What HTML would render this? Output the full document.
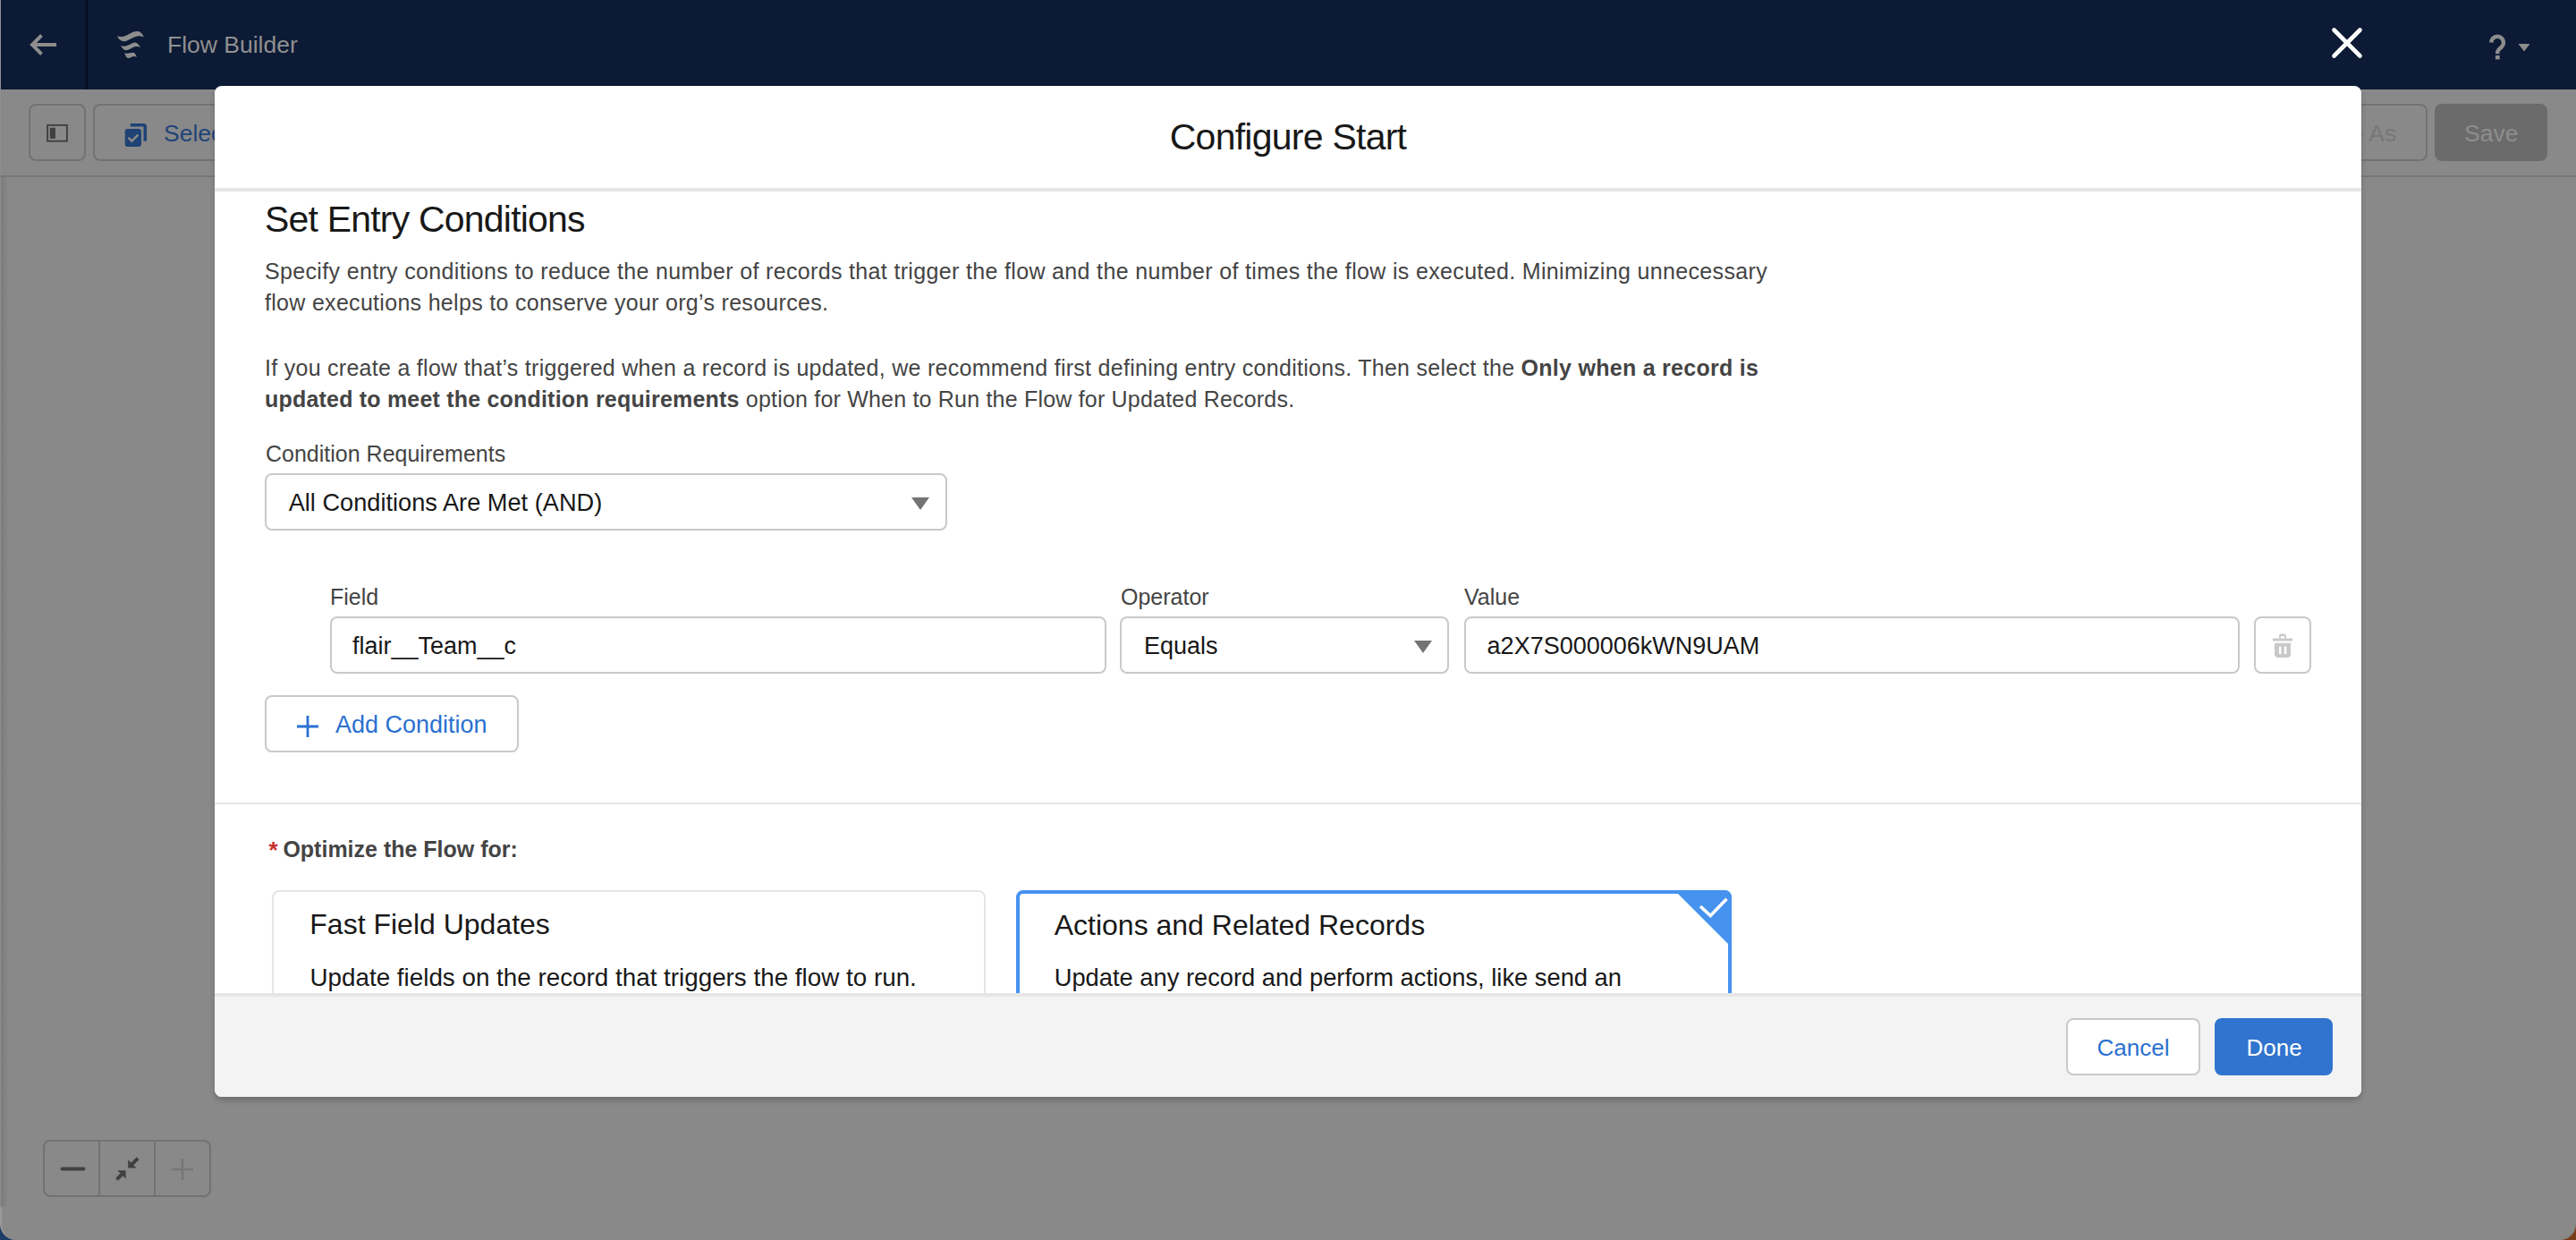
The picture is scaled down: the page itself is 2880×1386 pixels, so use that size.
<!DOCTYPE html>
<html><head><meta charset="utf-8">
<style>
*{box-sizing:border-box;margin:0;padding:0}
html,body{width:2880px;height:1386px;overflow:hidden}
body{position:relative;background:#898989;font-family:"Liberation Sans",sans-serif;color:#181818}
.a{position:absolute;white-space:nowrap;line-height:1}
svg{position:absolute;overflow:visible}
#hdr{position:absolute;left:0;top:0;width:2880px;height:100px;background:#0c1a35}
#hdiv{position:absolute;left:96px;top:0;width:2px;height:100px;background:#050d1e}
#tb{position:absolute;left:0;top:100px;width:2880px;height:98px;border-bottom:2px solid #777}
.tbtn{position:absolute;top:116px;height:64px;border:2px solid #727272;border-radius:8px}
#modal{position:absolute;left:240px;top:96px;width:2400px;height:1130px;background:#fff;border-radius:8px;box-shadow:0 4px 6px rgba(0,0,0,.2);overflow:hidden}
#mhsep{position:absolute;left:0;top:114px;width:2400px;height:4px;background:#e5e5e5}
#msep{position:absolute;left:0;top:801px;width:2400px;height:2px;background:#e5e5e5}
#mfoot{position:absolute;left:0;top:1014px;width:2400px;height:116px;background:#f3f3f3;border-top:4px solid #e5e5e5}
.box{position:absolute;border:2px solid #c9c9c9;border-radius:8px;background:#fff}
.lbl{color:#444;font-size:25px}
.p{color:#444;font-size:25px;letter-spacing:0.3px}
.btn{position:absolute;border:2px solid #c9c9c9;border-radius:8px;background:#fff}
.card{position:absolute;border:2px solid #e5e5e5;border-radius:8px;background:#fff}
</style></head><body>
<div id="hdr"></div>
<div id="hdiv"></div>
<div style="position:absolute;left:0;top:0;width:1px;height:1386px;background:#8f8f8f"></div>
<!-- back arrow -->
<svg style="left:0;top:0" width="100" height="100"><path d="M63 50H38M46.5 39.5L36 50L46.5 60.5" stroke="#8d8d8d" stroke-width="3.9" fill="none"/></svg>
<!-- flow icon -->
<svg style="left:0;top:0" width="200" height="100"><g fill="#8d8d8d">
<path d="M131 40.3C134 41.5 137.5 41.5 142 39.3C147 36.5 150 35 154 35.1C157 35.3 159.5 38 160.8 41.5C157 40 155 39.8 152 40.8C148 42 144 45 140 46.2C136 47 133 44.5 131 40.3Z"/>
<path d="M135 50.8C137.5 52 140.5 52 144 50.3C147 48.7 149 47.4 151 47.4C153.5 47.5 155.5 50 157 53C155 52 153 51.6 150.5 52.3C147.5 53.2 144.5 55.8 141.5 56.2C138.5 56.5 136.5 54 135 50.8Z"/>
<path d="M139.2 58.9C141 60 142.5 60 145 59.3C146.5 58.8 147.5 58.6 149 58.7C151 59 152 61.5 152.9 63.9C151.5 63 150 62.8 148.5 63.3C146.5 64 145 65 143.8 65C141.5 65 140 62 139.2 58.9Z"/>
</g></svg>
<div class="a" style="left:187px;top:37px;font-size:26.5px;color:#909090">Flow Builder</div>
<!-- close X -->
<svg style="left:0;top:0" width="2880" height="100"><path d="M2609.5 33.5L2638.5 62.5M2638.5 33.5L2609.5 62.5" stroke="#fff" stroke-width="4.6" stroke-linecap="round"/></svg>
<svg style="left:0;top:0" width="2880" height="100"><path d="M2785.3 47.5a6.8 6.8 0 1 1 11.5 5c-2.5 2.2 -4.6 3.2 -4.6 6.5v1.2" stroke="#8d8d8d" stroke-width="4.4" fill="none"/><rect x="2789.9" y="62" width="4.8" height="4.4" fill="#8d8d8d"/></svg>
<svg style="left:0;top:0" width="2880" height="100"><path d="M2815.5 49H2828.5L2822 57.5Z" fill="#8d8d8d"/></svg>

<!-- toolbar -->
<div id="tb"></div>
<div class="tbtn" style="left:32px;width:64px"></div>
<svg style="left:0;top:0" width="200" height="200"><rect x="53.1" y="139.9" width="21.8" height="17.8" fill="none" stroke="#404040" stroke-width="1.9"/><rect x="55.8" y="142.8" width="6.1" height="12.1" fill="#404040"/></svg>
<div class="tbtn" style="left:104px;width:400px"></div>
<svg style="left:0;top:0" width="300" height="200"><path d="M145.8 139.8h14.5a2 2 0 0 1 2 2v16" stroke="#1f4275" stroke-width="3.6" fill="none"/><rect x="138.2" y="142.4" width="21.3" height="23" rx="4" fill="#898989"/><rect x="139.7" y="143.9" width="18.3" height="20" rx="3" fill="#1f4275"/><path d="M143.5 153.8l3.9 3.9l7-7.1" stroke="#898989" stroke-width="2.4" fill="none"/></svg>
<div class="a" style="left:183px;top:136px;font-size:26.5px;color:#1f4478">Select Elements</div>
<div class="tbtn" style="left:2400px;width:314px"></div>
<div class="a" style="left:2582px;top:136px;font-size:26.5px;color:#777">Save As</div>
<div class="tbtn" style="left:2722px;width:126px;background:#6b6b6b;border-color:#6b6b6b"></div>
<div class="a" style="left:2755px;top:136px;font-size:26.5px;color:#8e8e8e">Save</div>

<div style="position:absolute;left:1px;top:198px;width:8px;height:1150px;background:linear-gradient(to right,rgba(0,0,0,.1),rgba(0,0,0,0))"></div>
<!-- zoom controls -->
<div style="position:absolute;left:48px;top:1274px;width:188px;height:64px;border:2px solid #727272;border-radius:8px"></div>
<div style="position:absolute;left:110px;top:1274px;width:2px;height:64px;background:#727272"></div>
<div style="position:absolute;left:172px;top:1274px;width:2px;height:64px;background:#727272"></div>
<svg style="left:0;top:0" width="300" height="1386"><path d="M69.5 1306.5H93.5" stroke="#404040" stroke-width="3.8" stroke-linecap="round"/>
<path d="M192 1307H216M204 1295V1319" stroke="#777" stroke-width="2.6"/>
<g fill="#404040"><path d="M143.2 1296.6V1305.6H152.6Z"/><path d="M131.3 1308.2H140.6V1317.5Z"/></g><path d="M146.5 1302.3L154.2 1294.6M137.3 1311.5L130.5 1318.3" stroke="#404040" stroke-width="4"/></svg>

<!-- window corners -->
<div style="position:absolute;left:0;top:1350px;width:36px;height:36px;background:#1c3d66"></div>
<div style="position:absolute;left:0;top:1350px;width:36px;height:36px;background:#898989;border-bottom-left-radius:18px;border-left:2px solid #9a9a9a"></div>
<div style="position:absolute;left:2844px;top:1350px;width:36px;height:36px;background:#7a3d1a"></div>
<div style="position:absolute;left:2844px;top:1350px;width:36px;height:36px;background:#898989;border-bottom-right-radius:18px"></div>

<!-- modal -->
<div id="modal">
<div id="mhsep"></div>
<div class="a" style="left:0;top:37.3px;width:2400px;text-align:center;font-size:41px;letter-spacing:-0.75px">Configure Start</div>
<div class="a" style="left:56px;top:129.3px;font-size:41px;letter-spacing:-0.8px">Set Entry Conditions</div>
<div class="a p" style="left:56px;top:194.7px;letter-spacing:0.34px">Specify entry conditions to reduce the number of records that trigger the flow and the number of times the flow is executed. Minimizing unnecessary</div>
<div class="a p" style="left:56px;top:230.3px">flow executions helps to conserve your org’s resources.</div>
<div class="a p" style="left:56px;top:302.8px;letter-spacing:0.28px">If you create a flow that’s triggered when a record is updated, we recommend first defining entry conditions. Then select the <b>Only when a record is</b></div>
<div class="a p" style="left:56px;top:338.3px;letter-spacing:0.2px"><b>updated to meet the condition requirements</b> option for When to Run the Flow for Updated Records.</div>
<div class="a lbl" style="left:57px;top:399px">Condition Requirements</div>
<div class="box" style="left:56px;top:433px;width:763px;height:64px"></div>
<div class="a" style="left:82.7px;top:452px;font-size:27.2px">All Conditions Are Met (AND)</div>
<div class="a lbl" style="left:129px;top:558.8px">Field</div>
<div class="a lbl" style="left:1013px;top:558.8px">Operator</div>
<div class="a lbl" style="left:1397px;top:558.8px">Value</div>
<div class="box" style="left:129px;top:593px;width:868px;height:64px"></div>
<div class="box" style="left:1012px;top:593px;width:368px;height:64px"></div>
<div class="box" style="left:1397px;top:593px;width:867px;height:64px"></div>
<div class="box" style="left:2280px;top:593px;width:64px;height:64px"></div>
<svg style="left:0;top:0" width="2400" height="1000"><g fill="#c9c9c9"><rect x="2301" y="617.5" width="22" height="3"/><path d="M2308 617.5v-2.5a2.5 2.5 0 0 1 2.5 -2.5h3a2.5 2.5 0 0 1 2.5 2.5v2.5h-2v-2.5h-4v2.5z"/><path d="M2303 622.8h18v12.2a4 4 0 0 1 -4 4h-10a4 4 0 0 1 -4 -4z"/></g><g fill="#fff"><rect x="2308" y="626.4" width="2.5" height="8.9" rx="1"/><rect x="2313.8" y="626.4" width="2.5" height="8.9" rx="1"/></g></svg>
<div class="a" style="left:154px;top:613.1px;font-size:27px">flair__Team__c</div>
<div class="a" style="left:1039px;top:613.1px;font-size:27px">Equals</div>
<div class="a" style="left:1422.6px;top:613.1px;font-size:27px">a2X7S000006kWN9UAM</div>
<svg style="left:0;top:0" width="2400" height="1000"><path d="M779 460H799L789 474Z" fill="#747474"/><path d="M1341 620H1361L1351 634Z" fill="#747474"/></svg>
<div class="btn" style="left:56px;top:681px;width:284px;height:64px"></div>
<svg style="left:0;top:0" width="2400" height="1000"><path d="M92 716H116M104 704V728" stroke="#2a70d0" stroke-width="2.8"/></svg>
<div class="a" style="left:135px;top:701px;font-size:27px;color:#2a70d0">Add Condition</div>
<div id="msep"></div>
<div class="a" style="left:60.5px;top:841px;font-size:26px;font-weight:bold;color:#c9312d">*</div>
<div class="a" style="left:76.4px;top:840.8px;font-size:25px;font-weight:bold;color:#444">Optimize the Flow for:</div>
<div class="card" style="left:64px;top:899px;width:798px;height:200px"></div>
<div class="card" style="left:896px;top:899px;width:800px;height:200px;border:4px solid #4592ef"></div>
<svg style="left:0;top:0" width="2400" height="1100"><path d="M1632 899H1688A8 8 0 0 1 1696 907V963Z" fill="#4592ef"/><path d="M1661 917L1672.3 927.5L1690.5 908.7" stroke="#fff" stroke-width="3.6" fill="none"/></svg>
<div class="a" style="left:106.3px;top:921px;font-size:32px">Fast Field Updates</div>
<div class="a" style="left:938.7px;top:921.9px;font-size:32px">Actions and Related Records</div>
<div class="a" style="left:106.5px;top:982.5px;font-size:27.8px">Update fields on the record that triggers the flow to run.</div>
<div class="a" style="left:938.7px;top:983px;font-size:27.3px">Update any record and perform actions, like send an</div>
<div id="mfoot"></div>
<div class="btn" style="left:2069.5px;top:1042.4px;width:150px;height:64px"></div>
<div class="a" style="left:2104.5px;top:1062px;font-size:26px;color:#2a70d0">Cancel</div>
<div style="position:absolute;left:2236px;top:1042px;width:132px;height:64px;border-radius:8px;background:#3174cf"></div>
<div class="a" style="left:2271.6px;top:1062px;font-size:26px;color:#fff">Done</div>
</div>
</body></html>
